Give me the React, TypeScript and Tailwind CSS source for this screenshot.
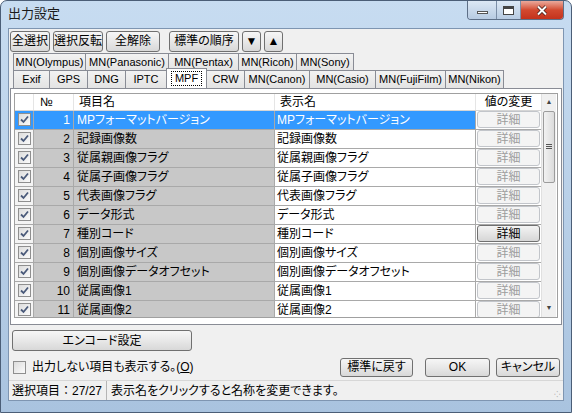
import React from "react";

const font = { fontFamily: '"Liberation Sans", "Noto Sans CJK JP", sans-serif' };

const rows = [
  "MPフォーマットバージョン",
  "記録画像数",
  "従属親画像フラグ",
  "従属子画像フラグ",
  "代表画像フラグ",
  "データ形式",
  "種別コード",
  "個別画像サイズ",
  "個別画像データオフセット",
  "従属画像1",
  "従属画像2",
];

function Check({ on = true }: { on?: boolean }) {
  return (
    <span className="inline-flex h-[13px] w-[13px] items-center justify-center border border-[#8f8f8f] bg-gradient-to-br from-[#dcdcdc] to-[#fbfbfb]">
      {on && (
        <svg width="9" height="9" viewBox="0 0 9 9">
          <path d="M1 4.5 L3.5 7 L8 1.5" fill="none" stroke="#4a5a7a" strokeWidth="1.8" />
        </svg>
      )}
    </span>
  );
}

function Btn({ children, className = "" }: { children: React.ReactNode; className?: string }) {
  return (
    <div
      className={
        "flex items-center justify-center rounded-[3px] border border-[#707070] bg-gradient-to-b from-[#f6f6f6] via-[#e8e8e8] to-[#d8d8d8] text-[12px] text-black " +
        className
      }
    >
      {children}
    </div>
  );
}

function Tab({ label, w, active = false }: { label: string; w: string; active?: boolean }) {
  return (
    <div
      className={
        "flex items-center justify-center border border-b-0 border-[#898c95] text-[11px] -ml-px first:ml-0 " +
        w +
        (active ? " relative z-10 -mt-[2px] h-[20px] bg-white" : " h-[18px] bg-gradient-to-b from-[#f2f2f2] to-[#e3e3e3]")
      }
    >
      <span className={active ? "border border-dotted border-black px-[3px] leading-[13px]" : ""}>{label}</span>
    </div>
  );
}

export default function App() {
  return (
    <div
      style={font}
      className="flex h-[413px] w-[572px] flex-col overflow-hidden rounded-t-[7px] border border-[#4b5e77] bg-gradient-to-b from-[#c7dcf1] via-[#b9d0e8] to-[#a9c3df] text-black [font-feature-settings:'palt']"
    >
      {/* title bar */}
      <div className="flex h-[27px] shrink-0 items-start justify-between">
        <div className="pl-[7px] pt-[5px] text-[13px] leading-[16px] text-[#1a1a1a]">出力設定</div>
        <div className="mr-[7px] flex h-[19px] overflow-hidden rounded-b-[4px] border border-t-0 border-[#5d6f87]">
          <div className="flex w-[29px] items-center justify-center border-r border-[#7b8ea7] bg-gradient-to-b from-[#dce8f5] to-[#b7cbe2]">
            <div className="mt-[4px] h-[3px] w-[11px] border border-[#555] bg-white" />
          </div>
          <div className="flex w-[24px] items-center justify-center border-r border-[#7b8ea7] bg-gradient-to-b from-[#dce8f5] to-[#b7cbe2]">
            <div className="h-[9px] w-[11px] border border-[#444] border-t-[3px] bg-white" />
          </div>
          <div className="flex w-[42px] items-center justify-center bg-gradient-to-b from-[#e9a99c] via-[#d2492f] to-[#c4321c]">
            <svg width="12" height="11" viewBox="0 0 12 11">
              <path d="M2 1.5 L10 9.5 M10 1.5 L2 9.5" stroke="#3a1510" strokeWidth="3.4" />
              <path d="M2 1.5 L10 9.5 M10 1.5 L2 9.5" stroke="#fff" strokeWidth="2" />
            </svg>
          </div>
        </div>
      </div>

      {/* client area */}
      <div className="mx-[7px] flex h-[373px] shrink-0 flex-col border border-[#7e95b1] bg-[#f0f0f0]">
        {/* toolbar */}
        <div className="flex h-[23px] items-end gap-[3px] pl-[1px]">
          <Btn className="h-[21px] w-[40px]">全選択</Btn>
          <Btn className="h-[21px] w-[50px]">選択反転</Btn>
          <Btn className="h-[21px] w-[54px]">全解除</Btn>
          <Btn className="ml-[6px] h-[21px] w-[70px]">標準の順序</Btn>
          <Btn className="h-[21px] w-[19px] text-[11px]">▼</Btn>
          <Btn className="h-[21px] w-[19px] text-[11px]">▲</Btn>
        </div>

        {/* tabs */}
        <div className="mt-[1px] flex h-[18px] items-end pl-[4px]">
          <Tab label="MN(Olympus)" w="w-[73px]" />
          <Tab label="MN(Panasonic)" w="w-[84px]" />
          <Tab label="MN(Pentax)" w="w-[71px]" />
          <Tab label="MN(Ricoh)" w="w-[59px]" />
          <Tab label="MN(Sony)" w="w-[58px]" />
        </div>
        <div className="flex h-[17px] items-end pl-[4px]">
          <Tab label="Exif" w="w-[37px]" />
          <Tab label="GPS" w="w-[39px]" />
          <Tab label="DNG" w="w-[39px]" />
          <Tab label="IPTC" w="w-[42px]" />
          <Tab label="MPF" w="w-[41px]" active />
          <Tab label="CRW" w="w-[39px]" />
          <Tab label="MN(Canon)" w="w-[66px]" />
          <Tab label="MN(Casio)" w="w-[67px]" />
          <Tab label="MN(FujiFilm)" w="w-[71px]" />
          <Tab label="MN(Nikon)" w="w-[59px]" />
        </div>

        {/* panel */}
        <div className="mx-[1px] h-[240px] border border-[#898c95] bg-white px-[3px] pt-[4px]">
          <div className="flex h-[225px] border border-[#a0a0a0]">
            <div className="flex w-[526px] flex-col">
              {/* header */}
              <div className="grid h-[17px] shrink-0 grid-cols-[19px_40px_201px_201px_65px] border-b border-[#d5d5d5] bg-white text-[12px] leading-[16px]">
                <div className="border-r border-[#e5e5e5]" />
                <div className="border-r border-[#e5e5e5] pl-[6px]">№</div>
                <div className="border-r border-[#e5e5e5] pl-[5px]">項目名</div>
                <div className="border-r border-[#e5e5e5] pl-[5px]">表示名</div>
                <div className="text-center">値の変更</div>
              </div>
              {/* rows */}
              <div className="flex flex-col overflow-hidden">
                {rows.map((name, i) => {
                  const sel = i === 0;
                  const enabled = i === 6;
                  return (
                    <div
                      key={i}
                      className="grid h-[19px] shrink-0 grid-cols-[19px_40px_201px_201px_65px] border-b border-[#a9a9a9] text-[12px] leading-[18px]"
                    >
                      <div className={"flex items-center justify-center border-r border-[#a9a9a9] " + (sel ? "bg-[#3399ff]" : "bg-[#f4f4f4]")}>
                        <Check />
                      </div>
                      <div className={"border-r border-[#a9a9a9] pr-[3px] text-right " + (sel ? "bg-[#3399ff] text-white" : "bg-[#c8c8c8]")}>
                        {i + 1}
                      </div>
                      <div className={"truncate border-r border-[#a9a9a9] pl-[3px] " + (sel ? "bg-[#3399ff] text-white" : "bg-[#c8c8c8]")}>
                        {name}
                      </div>
                      <div className={"truncate border-r border-[#a9a9a9] pl-[2px] " + (sel ? "bg-[#3399ff] text-white" : "bg-white")}>
                        {name}
                      </div>
                      <div className="flex items-center bg-white px-[1px]">
                        {enabled ? (
                          <div className="flex h-[17px] w-full items-center justify-center rounded-[3px] border border-[#707070] bg-gradient-to-b from-[#f4f4f4] to-[#d6d6d6] text-[12px]">
                            詳細
                          </div>
                        ) : (
                          <div className="flex h-[17px] w-full items-center justify-center rounded-[3px] border border-[#c2c5ca] bg-[#f4f4f4] text-[12px] text-[#9d9d9d]">
                            詳細
                          </div>
                        )}
                      </div>
                    </div>
                  );
                })}
              </div>
            </div>
            {/* scrollbar */}
            <div className="flex w-[15px] flex-col border-l border-[#e0e0e0] bg-[#f0f0f0]">
              <div className="flex h-[17px] items-center justify-center text-[7px] text-[#444]">▲</div>
              <div className="mx-[1px] flex h-[72px] items-center justify-center rounded-[2px] border border-[#9c9c9c] bg-gradient-to-r from-[#f2f2f2] to-[#dcdcdc]">
                <div className="flex flex-col gap-[1px]">
                  <div className="h-px w-[6px] bg-[#555]" />
                  <div className="h-px w-[6px] bg-[#555]" />
                  <div className="h-px w-[6px] bg-[#555]" />
                </div>
              </div>
              <div className="flex-1" />
              <div className="flex h-[17px] items-center justify-center text-[7px] text-[#444]">▼</div>
            </div>
          </div>
        </div>

        {/* encode button */}
        <Btn className="ml-[3px] mt-[5px] h-[22px] w-[180px]">エンコード設定</Btn>

        {/* checkbox + buttons */}
        <div className="mt-[6px] flex h-[20px] items-center justify-between pl-[4px] pr-[3px]">
          <div className="flex items-center gap-[6px] text-[12px]">
            <Check on={false} />
            <span>
              出力しない項目も表示する。(<span className="underline">O</span>)
            </span>
          </div>
          <div className="flex gap-[6px]">
            <Btn className="h-[19px] w-[73px]">標準に戻す</Btn>
            <Btn className="ml-[6px] h-[19px] w-[65px]">OK</Btn>
            <Btn className="h-[19px] w-[64px]">キャンセル</Btn>
          </div>
        </div>

        {/* status bar */}
        <div className="mt-[3px] flex h-[20px] items-center border-t border-[#d7d7d7] text-[12px]">
          <div className="flex h-full items-center border-r border-[#b5b5b5] pl-[3px] pr-[4px] [font-feature-settings:normal]">
            選択項目：27/27
          </div>
          <div className="flex-1 pl-[4px]">表示名をクリックすると名称を変更できます。</div>
          <div className="self-end pb-[1px] pr-[2px] text-[8px] leading-[8px] text-[#999]">⁘</div>
        </div>
      </div>
    </div>
  );
}
